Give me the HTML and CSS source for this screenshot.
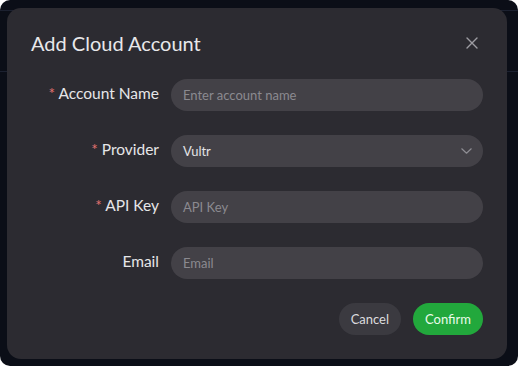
FILE: index.html
```html
<!DOCTYPE html>
<html lang="en">
<head>
<meta charset="utf-8">
<title>Add Cloud Account</title>
<link rel="stylesheet" href="styles.css">
</head>
<body>
<div class="screen">
  <div class="app-bg">
    <div class="app-top"></div>
    <div class="app-header"></div>
  </div>
  <div class="modal-layer">
    <div class="dialog">
      <div class="dialog-header">
        <h2 class="dialog-title">Add Cloud Account</h2>
        <button class="close-btn" aria-label="Close">
          <svg width="12" height="12" viewBox="0 0 12 12"><path d="M1 1L11 11M11 1L1 11" stroke="currentColor" stroke-width="1.4" fill="none" stroke-linecap="round"/></svg>
        </button>
      </div>
      <form class="dialog-body">
        <div class="form-row">
          <label class="form-label"><span class="req">*</span> Account Name</label>
          <div class="field placeholder">Enter account name</div>
        </div>
        <div class="form-row">
          <label class="form-label"><span class="req">*</span> Provider</label>
          <div class="field select">
            <span>Vultr</span>
            <svg class="chev" width="11" height="6" viewBox="0 0 11 6"><path d="M0.8 0.8L5.5 5.2L10.2 0.8" stroke="currentColor" stroke-width="1.2" fill="none" stroke-linecap="round" stroke-linejoin="round"/></svg>
          </div>
        </div>
        <div class="form-row">
          <label class="form-label"><span class="req">*</span> API Key</label>
          <div class="field placeholder">API Key</div>
        </div>
        <div class="form-row">
          <label class="form-label">Email</label>
          <div class="field placeholder">Email</div>
        </div>
      </form>
      <div class="dialog-footer">
        <button class="btn btn-cancel">Cancel</button>
        <button class="btn btn-confirm">Confirm</button>
      </div>
    </div>
  </div>
</div>
</body>
</html>
```
FILE: styles.css
```css
html, body {
  margin: 0;
  padding: 0;
  background: #ffffff;
}
body {
  width: 518px;
  height: 366px;
  overflow: hidden;
  font-family: "Lato", "Noto Sans", sans-serif;
}
.screen {
  position: relative;
  width: 518px;
  height: 366px;
  background: #0b0e17;
  border-radius: 10px;
  overflow: hidden;
}
.app-bg {
  display: flex;
  flex-direction: column;
}
.app-top {
  height: 10px;
  border-bottom: 1px solid #1c2130;
}
.app-header {
  height: 60px;
  border-bottom: 1px solid #1c2130;
}
.modal-layer {
  position: absolute;
  inset: 0;
  display: flex;
  align-items: flex-start;
  padding: 8px 11px 7px 7px;
}
.dialog {
  width: 500px;
  height: 351px;
  box-sizing: border-box;
  background: #2c2b31;
  border-radius: 14px;
  display: flex;
  flex-direction: column;
}
.dialog-header {
  display: flex;
  align-items: center;
  justify-content: space-between;
  padding: 20px 24px 0 24px;
  height: 30px;
}
.dialog-title {
  margin: 0;
  font-size: 20px;
  font-weight: 400;
  color: #e8e8ea;
  line-height: 30px;
}
.close-btn {
  width: 20px;
  height: 20px;
  padding: 0;
  border: none;
  background: none;
  color: #9d9ca2;
  display: flex;
  align-items: center;
  justify-content: center;
  margin-right: 1px;
}
.dialog-body {
  margin: 0;
  padding: 21px 24px 0 24px;
  display: flex;
  flex-direction: column;
  gap: 24px;
}
.form-row {
  display: flex;
  align-items: center;
  gap: 12px;
  height: 32px;
}
.form-label {
  width: 128px;
  text-align: right;
  font-size: 15.5px;
  color: #e6e6e8;
  white-space: nowrap;
  margin-bottom: 4px;
}
.req {
  color: #e0706f;
}
.field {
  flex: 1;
  height: 32px;
  border-radius: 16px;
  background: #434147;
  box-sizing: border-box;
  padding: 0 12px;
  display: flex;
  align-items: center;
  font-size: 13px;
  color: #e4e4e6;
}
.field.placeholder {
  color: #8b8a90;
}
.field.select {
  justify-content: space-between;
}
.chev {
  color: #8d8c92;
  margin-right: -1px;
}
.dialog-footer {
  display: flex;
  justify-content: flex-end;
  gap: 12px;
  padding: 24px 24px 0 24px;
}
.btn {
  height: 32px;
  border: none;
  border-radius: 16px;
  padding: 0 12px;
  font-family: inherit;
  font-size: 13px;
}
.btn-cancel {
  background: #3b3a40;
  color: #dcdcde;
}
.btn-confirm {
  background: #22a83c;
  color: #eafbea;
}
```
